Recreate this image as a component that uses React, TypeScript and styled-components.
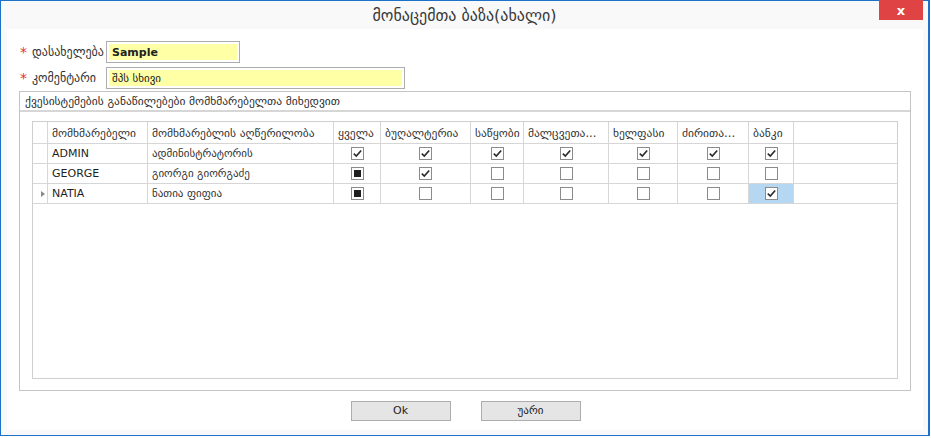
import React from 'react';
import styled, { createGlobalStyle } from 'styled-components';

const GlobalStyle = createGlobalStyle`
    html, body {
        margin: 0;
        padding: 0;
        background: #ffffff;
    }
    * {
        box-sizing: border-box;
    }
    body {
        font-family: "DejaVu Sans", "Noto Sans", sans-serif;
        font-size: 12px;
        color: #333333;
    }
`;

const Window = styled.div`
    width: 930px;
    height: 436px;
    border: 1px solid #1c72c9;
    border-right-width: 2px;
    background: #f9f9f9;
    display: flex;
    flex-direction: column;
`;

const TitleBar = styled.div`
    height: 28px;
    position: relative;
    display: flex;
    align-items: center;
    justify-content: center;
    font-size: 16px;
    color: #3a3a3a;
`;

const CloseButton = styled.div`
    position: absolute;
    top: -1px;
    right: 5px;
    width: 44px;
    height: 20px;
    background: #e04343;
    color: #ffffff;
    font-weight: bold;
    font-size: 13px;
    display: flex;
    align-items: center;
    justify-content: center;
`;

const Body = styled.div`
    flex: 1;
    margin: 0 5px 5px 6px;
    background: #ffffff;
    display: flex;
    flex-direction: column;
    padding: 12px 12px 0 12px;
`;

const FieldRow = styled.div`
    display: flex;
    align-items: center;
    height: 22px;
    margin-bottom: 4px;
    padding-left: 1px;
`;

const Star = styled.span`
    color: #e8302c;
    width: 12px;
    font-size: 14px;
    line-height: 1;
`;

const Label = styled.span`
    width: 74px;
    font-size: 12px;
    color: #333333;
    white-space: nowrap;
`;

const Input = styled.div<{ $width: number }>`
    width: ${p => p.$width}px;
    height: 22px;
    border: 1px solid #adadad;
    background: #ffffff;
    padding: 2px;
    display: flex;
`;

const InputFill = styled.div<{ $bold?: boolean }>`
    flex: 1;
    background: #ffffa6;
    padding-left: 3px;
    display: flex;
    align-items: center;
    font-size: 11px;
    font-weight: ${p => (p.$bold ? 'bold' : 'normal')};
    color: #222222;
`;

const Group = styled.div`
    margin-top: -2px;
    height: 300px;
    border: 1px solid #c4c4c4;
    display: flex;
    flex-direction: column;
`;

const GroupHeader = styled.div`
    height: 20px;
    padding-left: 5px;
    display: flex;
    align-items: center;
    font-size: 11.5px;
    color: #2e2e2e;
    border-bottom: 2px solid #d6d6d6;
`;

const GroupBody = styled.div`
    flex: 1;
    padding: 9px 12px 11px 12px;
    display: flex;
`;

const Grid = styled.div`
    flex: 1;
    border: 1px solid #cfcfcf;
    display: grid;
    grid-template-columns: 15px 100px 186px 47px 90px 53px 85px 69px 71px 45px 1fr;
    grid-auto-rows: 20px;
    grid-template-rows: 22px;
    align-content: start;
`;

const Cell = styled.div<{ $center?: boolean; $head?: boolean; $selected?: boolean; $last?: boolean }>`
    border-right: ${p => (p.$last ? 'none' : '1px solid #d6d6d6')};
    border-bottom: 1px solid #d6d6d6;
    background: ${p => (p.$selected ? '#b5d7f2' : '#ffffff')};
    display: flex;
    align-items: center;
    justify-content: ${p => (p.$center ? 'center' : 'flex-start')};
    padding-left: ${p => (p.$center ? 0 : 4)}px;
    font-size: ${p => (p.$head ? '11.5px' : '11px')};
    color: #333333;
    white-space: nowrap;
    overflow: hidden;
`;

const NameText = styled.span`
    font-size: 11px;
    color: #1f1f1f;
    font-weight: 500;
`;

const Indicator = styled.span`
    width: 0;
    height: 0;
    border-top: 3px solid transparent;
    border-bottom: 3px solid transparent;
    border-left: 4px solid #8a8a8a;
    margin-left: 4px;
`;

const Box = styled.div`
    width: 13px;
    height: 13px;
    border: 1px solid #8b8b8b;
    background: #ffffff;
    display: flex;
    align-items: center;
    justify-content: center;
`;

const Square = styled.div`
    width: 7px;
    height: 7px;
    background: #1e1e1e;
`;

const Footer = styled.div`
    flex: 1;
    display: flex;
    justify-content: center;
    align-items: center;
    gap: 30px;
    padding-left: 1px;
`;

const Button = styled.button`
    width: 100px;
    height: 20px;
    border: 1px solid #adadad;
    background: #e5e5e5;
    font-family: "DejaVu Sans", "Noto Sans", sans-serif;
    font-size: 11px;
    color: #222222;
    padding: 0;
`;

type CheckState = 'on' | 'off' | 'mixed';

const CheckBox = ({ state }: { state: CheckState }) => (
    <Box>
        {state === 'on' && (
            <svg width="11" height="11" viewBox="0 0 11 11">
                <path d="M1.8 5.6 L4.3 8.1 L9.2 2.4" fill="none" stroke="#2b2b2b" strokeWidth="1.6" />
            </svg>
        )}
        {state === 'mixed' && <Square />}
    </Box>
);

const columns = ['ყველა', 'ბუღალტერია', 'საწყობი', 'მალცვეთა...', 'ხელფასი', 'ძირითა...', 'ბანკი'];

const rows: { name: string; desc: string; checks: CheckState[] }[] = [
    { name: 'ADMIN', desc: 'ადმინისტრატორის', checks: ['on', 'on', 'on', 'on', 'on', 'on', 'on'] },
    { name: 'GEORGE', desc: 'გიორგი გიორგაძე', checks: ['mixed', 'on', 'off', 'off', 'off', 'off', 'off'] },
    { name: 'NATIA', desc: 'ნათია ფიფია', checks: ['mixed', 'off', 'off', 'off', 'off', 'off', 'on'] },
];

export default function App() {
    return (
        <>
            <GlobalStyle />
            <Window>
                <TitleBar>
                    მონაცემთა ბაზა(ახალი)
                    <CloseButton>x</CloseButton>
                </TitleBar>
                <Body>
                    <FieldRow>
                        <Star>*</Star>
                        <Label>დასახელება</Label>
                        <Input $width={134}>
                            <InputFill $bold>Sample</InputFill>
                        </Input>
                    </FieldRow>
                    <FieldRow>
                        <Star>*</Star>
                        <Label>კომენტარი</Label>
                        <Input $width={299}>
                            <InputFill>შპს სხივი</InputFill>
                        </Input>
                    </FieldRow>
                    <Group>
                        <GroupHeader>ქვესისტემების განაწილებები მომხმარებელთა მიხედვით</GroupHeader>
                        <GroupBody>
                            <Grid>
                                <Cell $head />
                                <Cell $head>მომხმარებელი</Cell>
                                <Cell $head>მომხმარებლის აღწერილობა</Cell>
                                {columns.map(c => (
                                    <Cell $head key={c}>{c}</Cell>
                                ))}
                                <Cell $head $last />
                                {rows.map((r, ri) => (
                                    <React.Fragment key={r.name}>
                                        <Cell>{ri === rows.length - 1 && <Indicator />}</Cell>
                                        <Cell><NameText>{r.name}</NameText></Cell>
                                        <Cell>{r.desc}</Cell>
                                        {r.checks.map((s, ci) => (
                                            <Cell
                                                key={ci}
                                                $center
                                                $selected={ri === rows.length - 1 && ci === r.checks.length - 1}
                                            >
                                                <CheckBox state={s} />
                                            </Cell>
                                        ))}
                                        <Cell $last />
                                    </React.Fragment>
                                ))}
                            </Grid>
                        </GroupBody>
                    </Group>
                    <Footer>
                        <Button>Ok</Button>
                        <Button>უარი</Button>
                    </Footer>
                </Body>
            </Window>
        </>
    );
}
